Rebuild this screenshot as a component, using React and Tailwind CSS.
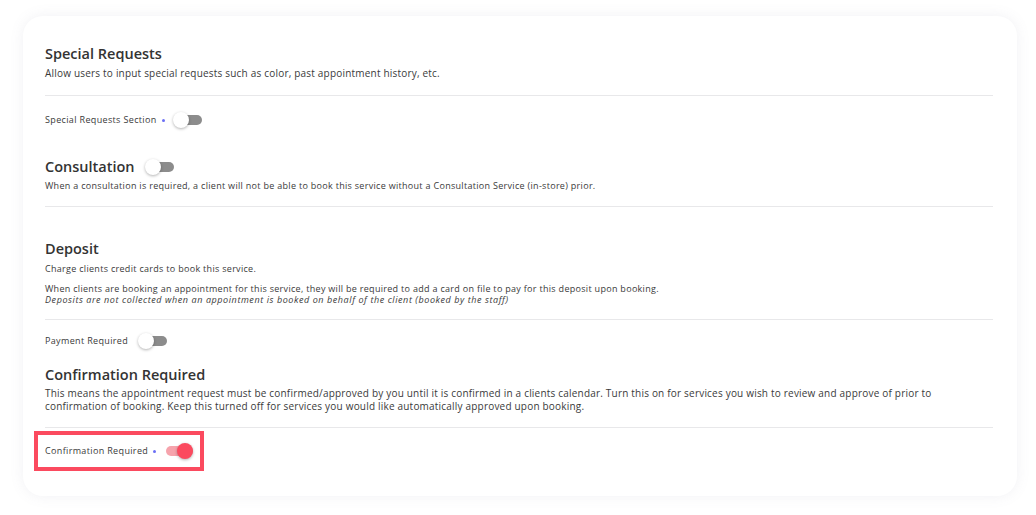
import { useState } from "react";

function Toggle({ on, onChange }) {
    return (
        <button
            onClick={onChange}
            className="relative h-[16px] w-[29px] shrink-0"
        >
            <span className={`absolute left-[2px] right-0 top-[3px] h-[10px] rounded-full ${on ? "bg-[#f6a3ac]" : "bg-[#8c8c8c]"}`} />
            <span
                className={`absolute top-0 h-[16px] w-[16px] rounded-full shadow-[0_1px_3px_rgba(0,0,0,0.3)] ${on ? "left-[13px] bg-[#fb4a5f]" : "left-0 bg-white"}`}
            />
        </button>
    );
}

function Dot() {
    return <span className="ml-[5px] mr-[8px] inline-block h-[3px] w-[3px] rounded-full bg-[#6b6ff5]" />;
}

export default function App() {
    const [special, setSpecial] = useState(false);
    const [consult, setConsult] = useState(false);
    const [payment, setPayment] = useState(false);
    const [confirm, setConfirm] = useState(true);

    return (
        <div className="h-[515px] w-[1036px] bg-white pl-[23px] pr-[19px] pt-[16px] font-['Open_Sans',sans-serif] text-[#3a3a3a]">
            <div className="flex h-[480px] flex-col rounded-[20px] bg-white pl-[22px] pr-[24px] pt-[28px] shadow-[0_0_14px_rgba(120,120,150,0.10)]">
                <h2 className="text-[14.5px] font-semibold leading-[20px] text-[#333]">Special Requests</h2>
                <p className="mt-[2px] text-[10px] leading-[14px] tracking-[0.2px]">
                    Allow users to input special requests such as color, past appointment history, etc.
                </p>
                <div className="mt-[15px] h-px bg-[#e8e8ea]" />

                <div className="mt-[14px] flex h-[20px] items-center text-[9px] tracking-[0.35px]">
                    <span>Special Requests Section</span>
                    <Dot />
                    <Toggle on={special} onChange={() => setSpecial(!special)} />
                </div>

                <div className="mt-[27px] flex h-[20px] items-center">
                    <h2 className="mr-[10px] text-[14.5px] font-semibold text-[#333]">Consultation</h2>
                    <Toggle on={consult} onChange={() => setConsult(!consult)} />
                </div>
                <p className="mt-[2px] text-[9px] leading-[14px] tracking-[0.3px]">
                    When a consultation is required, a client will not be able to book this service without a Consultation Service (in-store) prior.
                </p>
                <div className="mt-[13px] h-px bg-[#e8e8ea]" />

                <h2 className="mt-[32px] text-[14.5px] font-semibold leading-[20px] text-[#333]">Deposit</h2>
                <p className="mt-[3px] text-[9px] leading-[14px] tracking-[0.3px]">Charge clients credit cards to book this service.</p>
                <div className="mt-[7px] text-[9px] leading-[11px] tracking-[0.3px]">
                    <p>When clients are booking an appointment for this service, they will be required to add a card on file to pay for this deposit upon booking.</p>
                    <p className="italic tracking-[0.58px]">Deposits are not collected when an appointment is booked on behalf of the client (booked by the staff)</p>
                </div>
                <div className="mt-[14px] h-px bg-[#e8e8ea]" />

                <div className="mt-[11px] flex h-[20px] items-center text-[9px] tracking-[0.35px]">
                    <span className="mr-[10px]">Payment Required</span>
                    <Toggle on={payment} onChange={() => setPayment(!payment)} />
                </div>

                <h2 className="mt-[14px] text-[14.5px] font-semibold leading-[20px] text-[#333]">Confirmation Required</h2>
                <p className="mt-[2px] pr-[50px] text-[10px] leading-[13px] tracking-[0.2px]">
                    This means the appointment request must be confirmed/approved by you until it is confirmed in a clients calendar. Turn this on for services you wish to review and approve of prior to confirmation of booking. Keep this turned off for services you would like automatically approved upon booking.
                </p>
                <div className="mt-[14px] h-px bg-[#e8e8ea]" />

                <div className="-ml-[11px] mt-[3px] flex h-[40px] w-[170px] items-center border-4 border-[#fb4a5f] pl-[7px] text-[9px] tracking-[0.35px]">
                    <span>Confirmation Required</span>
                    <Dot />
                    <Toggle on={confirm} onChange={() => setConfirm(!confirm)} />
                </div>
            </div>
        </div>
    );
}
